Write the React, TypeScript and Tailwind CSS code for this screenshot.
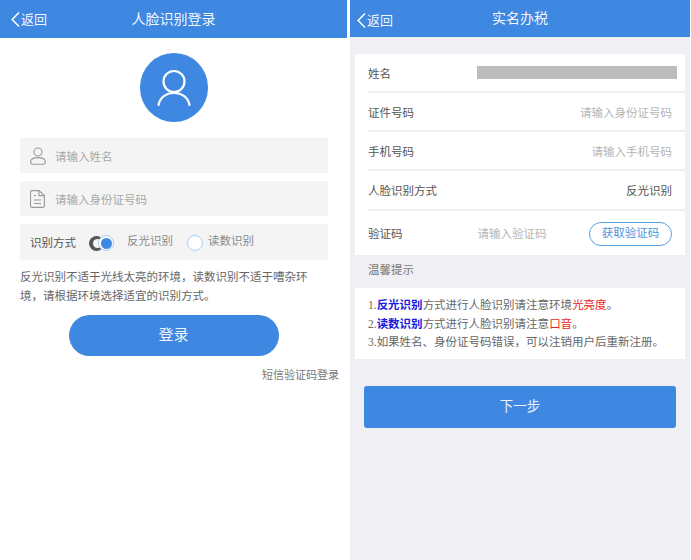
const font = { fontFamily: '"Liberation Sans", "Noto Sans CJK SC", sans-serif' };

function Header({ title, backClass, heightClass }: { title: string; backClass: string; heightClass: string }) {
  return (
    <div className={`relative flex items-center justify-center bg-[#3f88e2] text-[14px] text-white/95 ${heightClass}`}>
      <div className={`absolute flex h-[15px] items-center gap-[1px] text-[13px] ${backClass}`}>
        <svg viewBox="0 0 9 15" className="h-[15px] w-[9px]" fill="none" stroke="white" strokeWidth="1.5">
          <path d="M8 0.500 1.200 7.500 8 14.500" />
        </svg>
        <span>返回</span>
      </div>
      <span>{title}</span>
    </div>
  );
}

function PersonIcon() {
  return (
    <svg viewBox="0 0 16 18" className="h-[18px] w-[16px] text-[#9a9a9a]" fill="none" stroke="currentColor" strokeWidth="1.1">
      <circle cx="8" cy="5" r="4" />
      <path d="M0.600 14.800c0-2.600 3.200-4.200 7.400-4.200s7.400 1.600 7.400 4.200c0 1.500-1.100 2.500-2.500 2.500H3.100C1.700 17.300 0.600 16.300 0.600 14.800z" />
    </svg>
  );
}

function DocIcon() {
  return (
    <svg viewBox="0 0 15 18" className="h-[18px] w-[15px] text-[#9a9a9a]" fill="none" stroke="currentColor" strokeWidth="1.1">
      <path d="M2 0.600h7l5.400 5v10.300a1.500 1.500 0 0 1-1.500 1.500H2a1.500 1.500 0 0 1-1.500-1.500V2.100A1.500 1.500 0 0 1 2 0.600z" />
      <path d="M9 0.600v5h5.400M4 5.500h2M4 10h7M4 13.500h7" />
    </svg>
  );
}

function InputRow({ icon, placeholder }: { icon: React.ReactNode; placeholder: string }) {
  return (
    <div className="flex h-[35px] items-center rounded-[2px] bg-[#f4f4f4] pl-[10px]">
      <div className="flex w-[25px] justify-start">{icon}</div>
      <span className="mt-[4px] text-[11.500px] text-[#a8a8a8]">{placeholder}</span>
    </div>
  );
}

function LoginPanel() {
  return (
    <div className="h-[560px] w-[347px] shrink-0 bg-white">
      <Header title="人脸识别登录" heightClass="h-[38px]" backClass="left-[11px] top-[12px]" />
      <div className="flex justify-center pt-[15px]">
        <div className="flex h-[69px] w-[68px] items-center justify-center rounded-full bg-[#3f88e2]">
          <svg viewBox="0 0 34 38" className="h-[38px] w-[34px]" fill="none" stroke="white" strokeWidth="2.200" strokeLinecap="round">
            <circle cx="17" cy="12.500" r="10.500" />
            <path d="M1.500 36c1.500-7.500 7.500-12 15.500-12s14 4.500 15.500 12" />
          </svg>
        </div>
      </div>
      <div className="ml-[20px] mr-[19px] mt-[16px] flex flex-col gap-[8px]">
        <InputRow icon={<PersonIcon />} placeholder="请输入姓名" />
        <InputRow icon={<DocIcon />} placeholder="请输入身份证号码" />
        <div className="flex h-[36px] items-center rounded-[2px] bg-[#f4f4f4] pl-[10px] pt-[2px] text-[11.500px]">
          <span className="mt-[1px] text-[#555]">识别方式</span>
          <div className="relative ml-[13px] h-[16px] w-[25px]">
            <div className="absolute left-0 top-[1px] h-[15px] w-[15px] rounded-full bg-[#555]" />
            <div className="absolute left-[4px] top-[4px] h-[9px] w-[9px] rounded-full bg-[#f4f4f4]" />
            <div className="absolute left-[9px] top-0 flex h-[16px] w-[16px] items-center justify-center rounded-full border border-[#a9cdf5] bg-white">
              <div className="h-[11px] w-[11px] rounded-full bg-[#3f88e2]" />
            </div>
          </div>
          <span className="-mt-[3px] ml-[13px] text-[#8a8a8a]">反光识别</span>
          <div className="ml-[14px] h-[16px] w-[16px] rounded-full border border-[#a9cdf5] bg-white" />
          <span className="-mt-[3px] ml-[5px] text-[#8a8a8a]">读数识别</span>
        </div>
      </div>
      <p className="mx-[20px] mt-[8px] text-[11.500px] leading-[19px] text-[#666]">
        反光识别不适于光线太亮的环境，读数识别不适于嘈杂环境，请根据环境选择适宜的识别方式。
      </p>
      <button className="mx-auto mt-[9px] block h-[41px] w-[210px] rounded-full bg-[#3f88e2] text-[15px] text-white/95">
        登录
      </button>
      <div className="mt-[11px] pr-[8px] text-right text-[11px] text-[#777]">短信验证码登录</div>
    </div>
  );
}

function FormRow({ label, heightClass, children }: { label: string; heightClass: string; children: React.ReactNode }) {
  return (
    <div className={`ml-[13px] flex items-center justify-between border-b-2 border-[#f0f0f4] pr-[13px] pt-[4px] text-[11.500px] last:border-b-0 ${heightClass}`}>
      <span className="text-[#555]">{label}</span>
      {children}
    </div>
  );
}

function TaxPanel() {
  return (
    <div className="h-[560px] w-[340px] shrink-0 bg-[#efeff4]">
      <Header title="实名办税" heightClass="h-[37px]" backClass="left-[7px] top-[13px]" />
      <div className="mx-[5px] mt-[17px] bg-white">
        <FormRow label="姓名" heightClass="h-[39px]">
          <div className="-mr-[5px] -mt-[4px] h-[13px] w-[200px] bg-[#bdbdbd]" />
        </FormRow>
        <FormRow label="证件号码" heightClass="h-[39px]">
          <span className="text-[#b5b5b5]">请输入身份证号码</span>
        </FormRow>
        <FormRow label="手机号码" heightClass="h-[39px]">
          <span className="text-[#b5b5b5]">请输入手机号码</span>
        </FormRow>
        <FormRow label="人脸识别方式" heightClass="h-[40px]">
          <span className="text-[#555]">反光识别</span>
        </FormRow>
        <FormRow label="验证码" heightClass="h-[44px]">
          <span className="ml-[75px] mr-auto text-[#b5b5b5]">请输入验证码</span>
          <span className="-mt-[2px] flex h-[24px] w-[83px] items-center justify-center rounded-full border border-[#5aa0e6] text-[#4a94e0]">
            获取验证码
          </span>
        </FormRow>
      </div>
      <div className="ml-[18px] mt-[8px] text-[11.500px] leading-[15px] text-[#777]">温馨提示</div>
      <div className="mx-[5px] mt-[10px] h-[71px] bg-white pl-[13px] pt-[8px] text-[11.500px] leading-[18.500px] text-[#666]">
        <div>
          <span className="font-['Liberation_Serif']">1.</span>
          <b className="text-[#1a1ae0]">反光识别</b>方式进行人脸识别请注意环境<b className="font-normal text-[#e8241c]">光亮度</b>。
        </div>
        <div>
          <span className="font-['Liberation_Serif']">2.</span>
          <b className="text-[#1a1ae0]">读数识别</b>方式进行人脸识别请注意<b className="font-normal text-[#e8241c]">口音</b>。
        </div>
        <div>
          <span className="font-['Liberation_Serif']">3.</span>如果姓名、身份证号码错误，可以注销用户后重新注册。
        </div>
      </div>
      <button className="mx-[14px] mt-[27px] block h-[42px] w-[312px] rounded-[3px] bg-[#3f88e2] text-[13.500px] text-white/90">
        下一步
      </button>
    </div>
  );
}

export default function App() {
  return (
    <div className="flex h-[560px] w-[691px] gap-[3px] bg-white" style={font}>
      <LoginPanel />
      <TaxPanel />
    </div>
  );
}
